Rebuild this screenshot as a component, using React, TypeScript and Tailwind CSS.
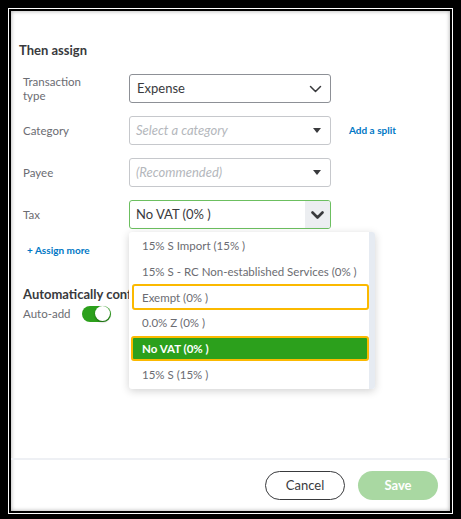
import React from 'react';

const font = { fontFamily: 'Lato, "Open Sans", Arial, sans-serif' };

function Caret() {
  return (
    <svg width="8" height="5" viewBox="0 0 8 5" className="text-[#393a3d]">
      <path d="M0 0 L8 0 L4 5 Z" fill="currentColor" />
    </svg>
  );
}

function Chevron({ bold }: { bold?: boolean }) {
  return (
    <svg width="13" height="8" viewBox="0 0 13 8" fill="none">
      <path
        d="M1.5 1.5 L6.5 6.5 L11.5 1.5"
        stroke="#393a3d"
        strokeWidth={bold ? 2.6 : 1.5}
        strokeLinecap="round"
        strokeLinejoin="round"
      />
    </svg>
  );
}

function Row({ label, children, extra }: { label: React.ReactNode; children: React.ReactNode; extra?: React.ReactNode }) {
  return (
    <div className="flex items-center h-[29px]">
      <div className="w-[110px] pl-[4px] text-[11.5px] leading-[14px] text-[#6b6c72]">{label}</div>
      {children}
      {extra}
    </div>
  );
}

const taxOptions = [
  { label: '15% S Import (15% )' },
  { label: '15% S - RC Non-established Services (0% )' },
  { label: 'Exempt (0% )', outlined: true },
  { label: '0.0% Z (0% )' },
  { label: 'No VAT (0% )', selected: true },
  { label: '15% S (15% )' },
];

export default function App() {
  return (
    <div className="w-[461px] h-[519px] bg-black pt-[8px] pl-[8px] pr-[8px] pb-[5px]" style={font}>
      <div className="w-full h-full border border-white">
        <div className="w-full h-full border-[2px] border-black">
          <div className="relative w-full h-full bg-white flex flex-col shadow-[inset_0_0_4px_rgba(0,0,0,0.35)]">
            {/* form */}
            <div className="flex-1 pl-[8px] pt-[31px]">
              <h2 className="text-[13px] leading-[16px] font-bold text-[#393a3d]">Then assign</h2>

              <div className="mt-[16px] flex flex-col gap-[13px]">
                <Row label={<>Transaction<br />type</>}>
                  <div className="w-[202px] h-[29px] border border-[#8d9096] rounded-[3px] flex items-center justify-between pl-[7px] pr-[8px]">
                    <span className="text-[13px] text-[#393a3d]">Expense</span>
                    <Chevron />
                  </div>
                </Row>

                <Row
                  label="Category"
                  extra={<span className="ml-[18px] text-[10px] font-bold text-[#0077c5]">Add a split</span>}
                >
                  <div className="w-[202px] h-[29px] border border-[#c6c8cc] rounded-[3px] flex items-center justify-between pl-[6px] pr-[9px]">
                    <span className="text-[13px] italic text-[#b4b7bc]">Select a category</span>
                    <Caret />
                  </div>
                </Row>

                <Row label="Payee">
                  <div className="w-[202px] h-[29px] border border-[#c6c8cc] rounded-[3px] flex items-center justify-between pl-[6px] pr-[9px]">
                    <span className="text-[13px] italic text-[#b4b7bc]">(Recommended)</span>
                    <Caret />
                  </div>
                </Row>

                <Row label="Tax">
                  <div className="relative w-[202px] h-[29px]">
                    <div className="w-full h-full border-[1.5px] border-[#6cbf60] rounded-[3px] flex items-center overflow-hidden">
                      <span className="flex-1 pl-[6px] text-[13px] text-[#393a3d]">No VAT (0% )</span>
                      <div className="w-[25px] h-full bg-[#eceef1] flex items-center justify-center">
                        <Chevron bold />
                      </div>
                    </div>

                    {/* open dropdown, lies over the section below */}
                    <div className="absolute z-10 left-0 top-[32px] w-[246px] h-[157px] bg-white rounded-[3px] shadow-[0_2px_8px_rgba(0,0,0,0.18)] flex">
                      <div className="flex-1 flex flex-col pl-[2px] pt-[1px]">
                        {taxOptions.map((o) => (
                          <div
                            key={o.label}
                            className={
                              'h-[25.7px] flex items-center text-[11.5px] ' +
                              (o.selected
                                ? 'bg-[#2ca01c] border-[2px] border-[#fbb900] rounded-[3px] text-white font-bold pl-[9px]'
                                : o.outlined
                                ? 'border-[2px] border-[#fbb900] rounded-[3px] text-[#6b6c72] ml-[1px] pl-[8px]'
                                : 'text-[#6b6c72] pl-[11px]')
                            }
                          >
                            {o.label}
                          </div>
                        ))}
                      </div>
                      <div className="w-[6px] h-full bg-[#e6ebf2] rounded-r-[3px]" />
                    </div>
                  </div>
                </Row>
              </div>

              <div className="mt-[14px] pl-[8px] text-[10px] font-bold text-[#0077c5]">+ Assign more</div>

              <div className="mt-[28px] pl-[4px] text-[13px] leading-[16px] font-bold text-[#393a3d] whitespace-nowrap">
                Automatically confirm transactions
              </div>
              <div className="mt-[3px] pl-[4px] flex items-center gap-[11px]">
                <span className="text-[11.5px] text-[#6b6c72]">Auto-add</span>
                <div className="w-[29px] h-[16px] rounded-full bg-[#2ca01c] flex items-center justify-end pr-[1px]">
                  <div className="w-[15px] h-[15px] rounded-full bg-white shadow-[0_1px_2px_rgba(0,0,0,0.4)]" />
                </div>
              </div>
            </div>

            {/* footer */}
            <div className="h-[53px] border-t-[2px] border-[#eef0f4] flex items-center justify-end gap-[13px] pr-[12px]">
              <button className="w-[80px] h-[29px] rounded-full border-[1.5px] border-[#393a3d] text-[13px] text-[#393a3d]">
                Cancel
              </button>
              <button className="w-[80px] h-[29px] rounded-full bg-[#a9d8a2] text-[13px] font-bold text-white">
                Save
              </button>
            </div>
          </div>
        </div>
      </div>
    </div>
  );
}
